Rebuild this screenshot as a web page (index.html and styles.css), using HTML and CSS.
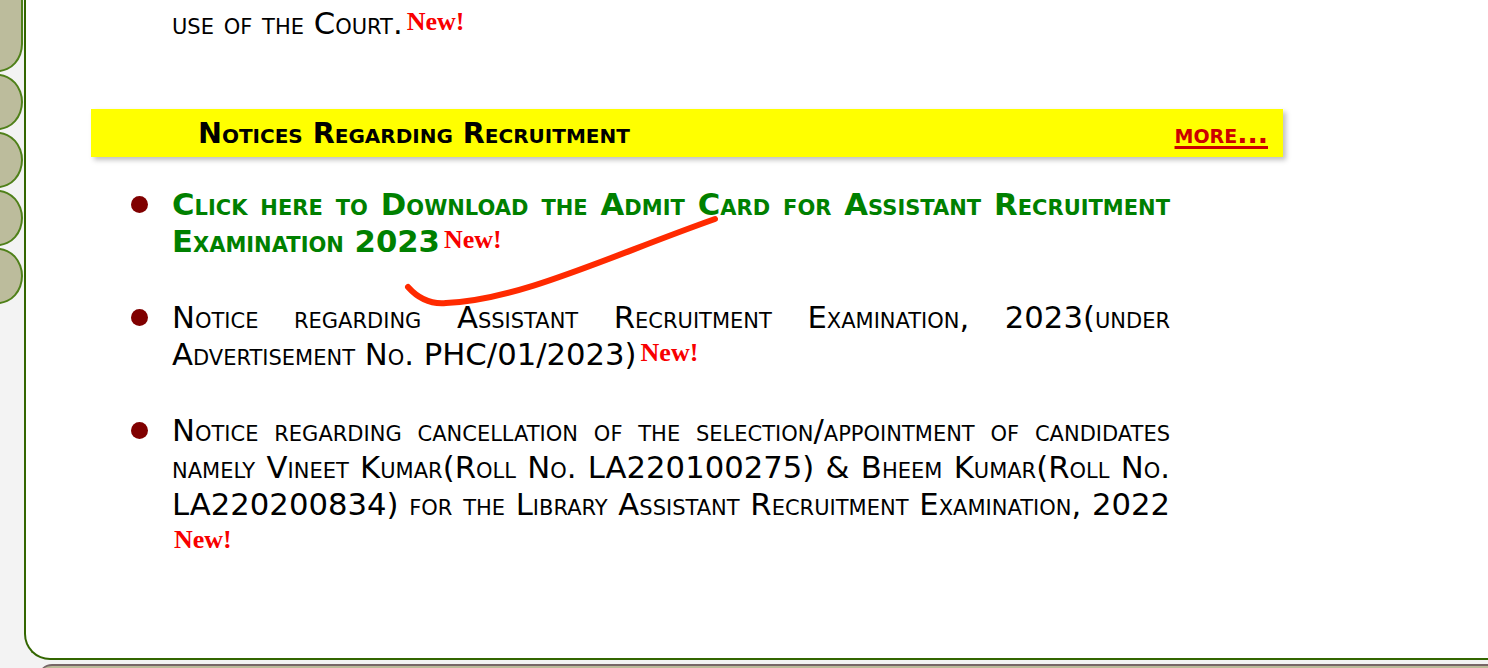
FILE: index.html
```html
<!DOCTYPE html>
<html>
<head>
<meta charset="utf-8">
<link rel="stylesheet" href="styles.css">
</head>
<body>
<div class="page">
  <div class="side">
    <div class="tabs">
      <div class="tab tab-first"></div>
      <div class="tab"></div>
      <div class="tab"></div>
      <div class="tab"></div>
      <div class="tab"></div>
    </div>
  </div>
  <div class="column">
    <div class="main">
      <p class="intro">use of the Court.<span class="new">New!</span></p>
      <div class="bar">
        <span class="bar-title">Notices Regarding Recruitment</span>
        <a class="more" href="#">more...</a>
      </div>
      <ul class="notices">
        <li class="item"><span class="dot"></span><p class="text"><a class="link" href="#">Click here to Download the Admit Card for Assistant Recruitment Examination 2023</a><span class="new">New!</span></p></li>
        <li class="item"><span class="dot"></span><p class="text">Notice regarding Assistant Recruitment Examination, 2023(under Advertisement No. PHC/01/2023)<span class="new">New!</span></p></li>
        <li class="item"><span class="dot"></span><p class="text">Notice regarding cancellation of the selection/appointment of candidates namely Vineet Kumar(Roll No. LA220100275) &amp; Bheem Kumar(Roll No. LA220200834) for the Library Assistant Recruitment Examination, 2022 <span class="new new-wrap">New!</span></p></li>
      </ul>
    </div>
    <div class="footer"></div>
  </div>
</div>
<svg class="scribble" width="1488" height="668" viewBox="0 0 1488 668">
  <path d="M408 287 Q424 305 446 303 C 520 300 610 256 715 219" fill="none" stroke="#ff2a00" stroke-width="6" stroke-linecap="round"/>
</svg>
</body>
</html>
```

FILE: styles.css
```css
html, body {
  margin: 0;
  padding: 0;
}
body {
  background: #f3f3f3;
  width: 1488px;
  height: 668px;
  overflow: hidden;
  font-family: "DejaVu Sans", Verdana, sans-serif;
}
.page {
  display: flex;
  height: 668px;
}
.side {
  width: 24px;
  flex: none;
  overflow: hidden;
}
.tabs {
  display: flex;
  flex-direction: column;
  gap: 2px;
  margin-left: -27px;
  margin-top: -28px;
}
.tab {
  width: 50px;
  height: 56px;
  box-sizing: border-box;
  background: #bcbc9c;
  border: 2px solid #4f8019;
  border-radius: 25px / 28px;
}
.tab-first {
  height: 100px;
}
.column {
  flex: 1;
  display: flex;
  flex-direction: column;
  overflow: hidden;
}
.main {
  flex: none;
  height: 660px;
  box-sizing: border-box;
  background: #fff;
  border-left: 2px solid #336600;
  border-bottom: 2px solid #336600;
  border-bottom-left-radius: 26px;
  padding-top: 5px;
}
.intro {
  margin: 0 0 0 146px;
  font-size: 30.7px;
  line-height: 37px;
  font-variant: small-caps;
  color: #000;
}
.new {
  font-family: "Liberation Serif", "Times New Roman", serif;
  font-weight: bold;
  font-variant: normal;
  font-size: 26px;
  line-height: 20px;
  color: #f80000;
  vertical-align: 4px;
  margin-left: 4px;
}
.new-wrap {
  margin-left: 2px;
}
.bar {
  margin: 67px 0 0 65px;
  width: 1192px;
  height: 48px;
  box-sizing: border-box;
  background: #ffff00;
  box-shadow: 3px 3px 5px rgba(0,0,0,0.25);
  display: flex;
  align-items: center;
  justify-content: space-between;
  padding: 0 15px 0 107px;
  font-weight: bold;
  font-variant: small-caps;
}
.bar-title {
  color: #000;
  font-size: 28.6px;
}
.more {
  color: #cc0000;
  font-size: 27px;
  text-decoration: underline;
  text-decoration-thickness: 3px;
  text-underline-offset: 3px;
}
.notices {
  list-style: none;
  margin: 29px 0 0 0;
  padding: 0 0 0 105px;
  display: flex;
  flex-direction: column;
  gap: 39px;
}
.item {
  display: grid;
  grid-template-columns: 41px 998px;
}
.dot {
  width: 17px;
  height: 17px;
  border-radius: 50%;
  background: #800000;
  margin-top: 10px;
}
.text {
  margin: 0;
  font-size: 30.7px;
  line-height: 37px;
  font-variant: small-caps;
  text-align: justify;
  color: #000;
}
.link {
  color: #008000;
  font-weight: bold;
  text-decoration: none;
}
.footer {
  flex: none;
  margin: 4px 0 0 14px;
  height: 20px;
  background: #bbbb99;
  border-top: 2px solid #776666;
  border-top-left-radius: 14px;
}
.scribble {
  position: absolute;
  left: 0;
  top: 0;
  pointer-events: none;
}
```
